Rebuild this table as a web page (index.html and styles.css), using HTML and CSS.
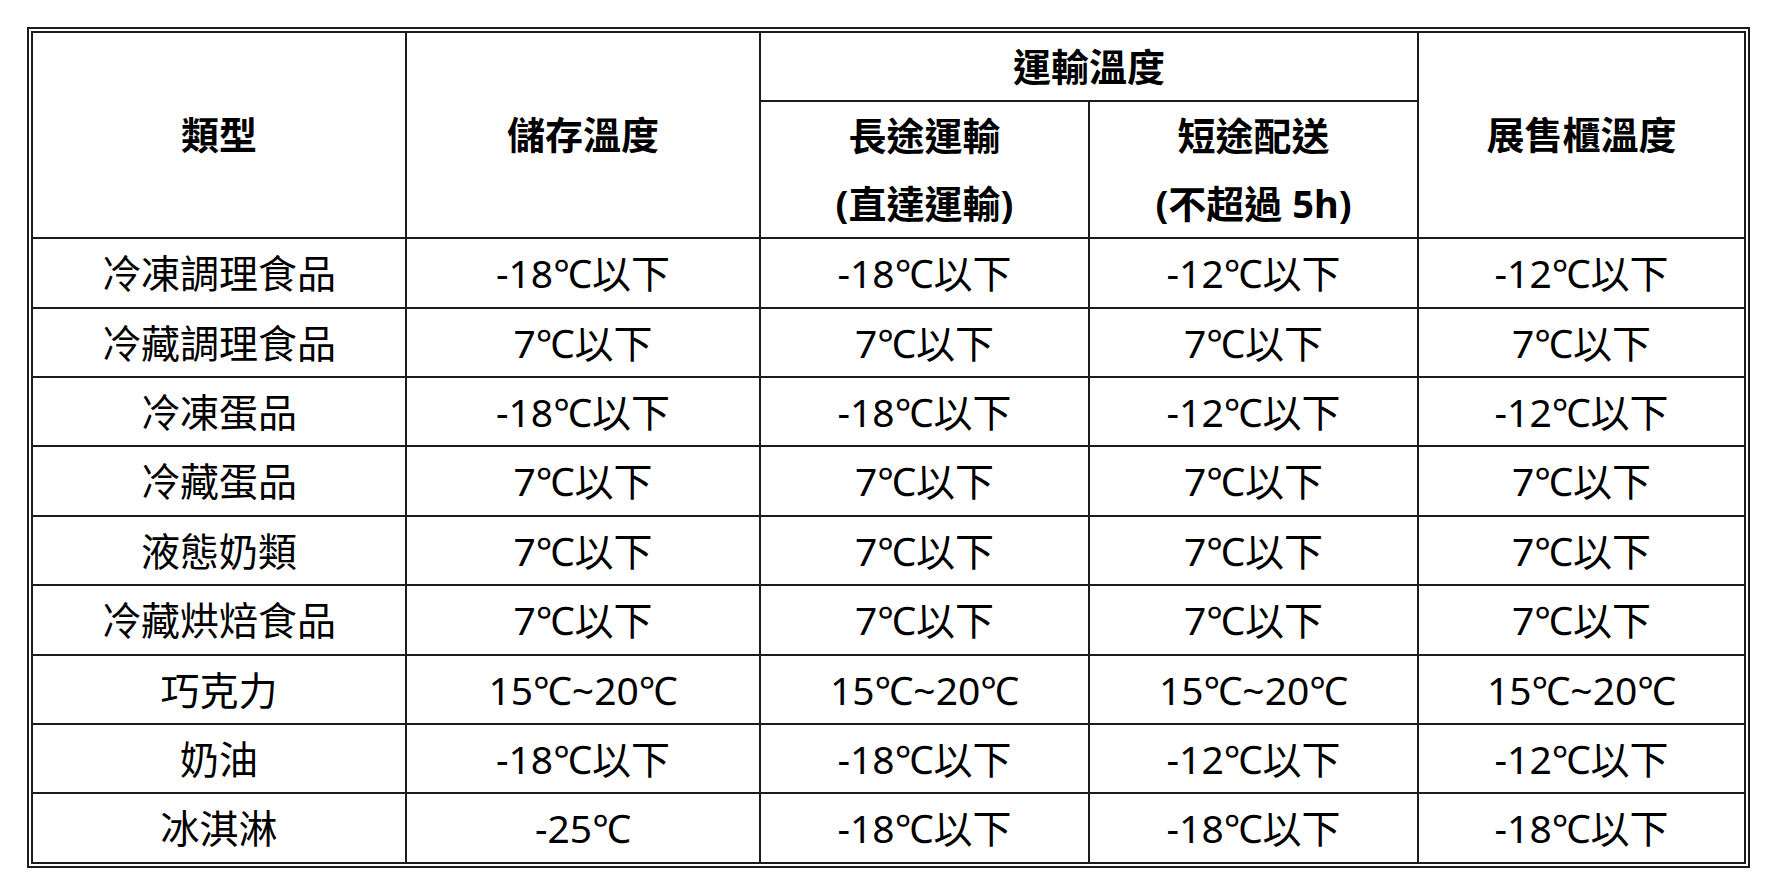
FILE: index.html
```html
<!DOCTYPE html>
<html lang="zh-Hant">
<head>
<meta charset="utf-8">
<title>溫度表</title>
<link rel="stylesheet" href="styles.css">
</head>
<body>
<div class="frame">
<table class="temps">
  <colgroup>
    <col class="c1"><col class="c2"><col class="c3"><col class="c4"><col class="c5">
  </colgroup>
  <thead>
    <tr class="h1">
      <th rowspan="2">類型</th>
      <th rowspan="2">儲存溫度</th>
      <th colspan="2">運輸溫度</th>
      <th rowspan="2">展售櫃溫度</th>
    </tr>
    <tr class="h2">
      <th>長途運輸<br>(直達運輸)</th>
      <th>短途配送<br>(不超過 5h)</th>
    </tr>
  </thead>
  <tbody>
    <tr><td>冷凍調理食品</td><td>-18℃以下</td><td>-18℃以下</td><td>-12℃以下</td><td>-12℃以下</td></tr>
    <tr><td>冷藏調理食品</td><td>7℃以下</td><td>7℃以下</td><td>7℃以下</td><td>7℃以下</td></tr>
    <tr><td>冷凍蛋品</td><td>-18℃以下</td><td>-18℃以下</td><td>-12℃以下</td><td>-12℃以下</td></tr>
    <tr><td>冷藏蛋品</td><td>7℃以下</td><td>7℃以下</td><td>7℃以下</td><td>7℃以下</td></tr>
    <tr><td>液態奶類</td><td>7℃以下</td><td>7℃以下</td><td>7℃以下</td><td>7℃以下</td></tr>
    <tr><td>冷藏烘焙食品</td><td>7℃以下</td><td>7℃以下</td><td>7℃以下</td><td>7℃以下</td></tr>
    <tr><td>巧克力</td><td>15℃~20℃</td><td>15℃~20℃</td><td>15℃~20℃</td><td>15℃~20℃</td></tr>
    <tr><td>奶油</td><td>-18℃以下</td><td>-18℃以下</td><td>-12℃以下</td><td>-12℃以下</td></tr>
    <tr><td>冰淇淋</td><td>-25℃</td><td>-18℃以下</td><td>-18℃以下</td><td>-18℃以下</td></tr>
  </tbody>
</table>
</div>
</body>
</html>
```

FILE: styles.css
```css
html, body {
  margin: 0;
  padding: 0;
  background: #ffffff;
}

body {
  padding: 27px 0 0 27px;
  font-family: "Noto Sans", "Noto Sans CJK TC", sans-serif;
  color: #000000;
}

.frame {
  display: inline-block;
  border: 2px solid #1c1c1c;
  padding: 2px;
}

.temps {
  border-collapse: collapse;
  table-layout: fixed;
  width: 1713px;
  font-size: 38px;
  line-height: 67.4px;
}

.c1 { width: 374px; }
.c2 { width: 354px; }
.c3 { width: 329px; }
.c4 { width: 329px; }
.c5 { width: 327px; }

.temps th,
.temps td {
  border: 2px solid #1c1c1c;
  padding: 0;
  text-align: center;
  vertical-align: middle;
  white-space: nowrap;
}

.temps th {
  font-weight: 700;
}

.temps td {
  font-size: 39px;
  font-weight: 400;
}
```
